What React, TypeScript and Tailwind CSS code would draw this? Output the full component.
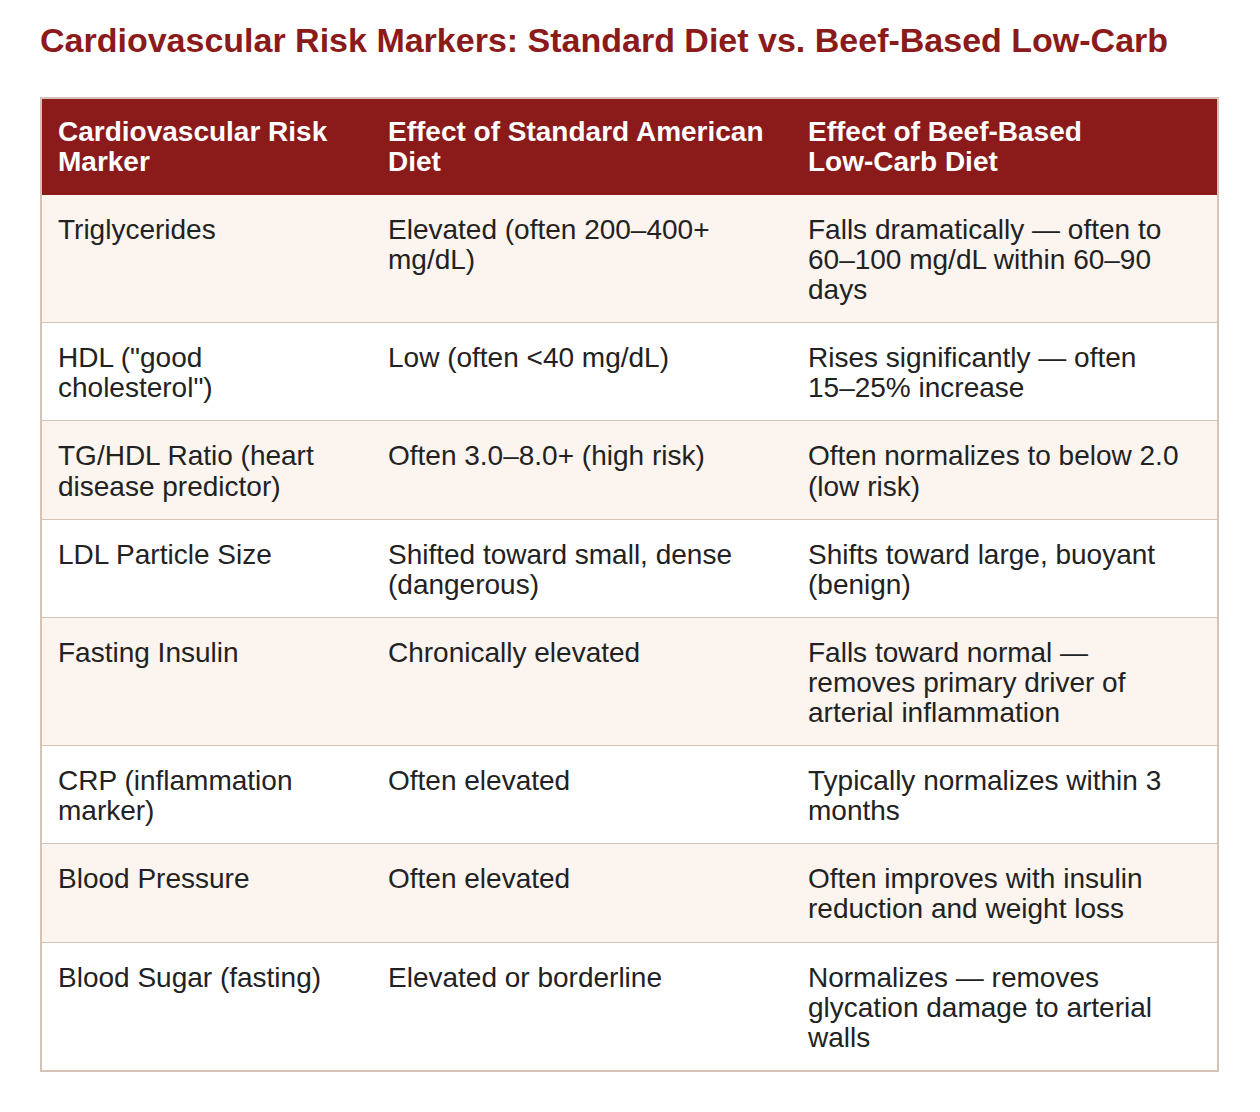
const ROWS: [string, string, string][] = [
  ["Triglycerides", "Elevated (often 200–400+ mg/dL)", "Falls dramatically — often to 60–100 mg/dL within 60–90 days"],
  ['HDL ("good cholesterol")', "Low (often <40 mg/dL)", "Rises significantly — often 15–25% increase"],
  ["TG/HDL Ratio (heart disease predictor)", "Often 3.0–8.0+ (high risk)", "Often normalizes to below 2.0 (low risk)"],
  ["LDL Particle Size", "Shifted toward small, dense (dangerous)", "Shifts toward large, buoyant (benign)"],
  ["Fasting Insulin", "Chronically elevated", "Falls toward normal — removes primary driver of arterial inflammation"],
  ["CRP (inflammation marker)", "Often elevated", "Typically normalizes within 3 months"],
  ["Blood Pressure", "Often elevated", "Often improves with insulin reduction and weight loss"],
  ["Blood Sugar (fasting)", "Elevated or borderline", "Normalizes — removes glycation damage to arterial walls"],
];

const HEADERS = ["Cardiovascular Risk Marker", "Effect of Standard American Diet", "Effect of Beef-Based Low-Carb Diet"];

// words like "Low-Carb" or "15–25%" stay on one line
function Cell({ text }: { text: string }) {
  const words = text.split(" ");
  return (
    <>
      {words.map((w, i) => (
        <span key={i}>
          {/[-–]/.test(w) && w.length > 1 ? <span className="whitespace-nowrap">{w}</span> : w}
          {i < words.length - 1 ? " " : ""}
        </span>
      ))}
    </>
  );
}

export default function App() {
  return (
    <div className="min-h-[1112px] bg-white px-[40px] pt-[20px] font-['Liberation_Sans',Arial,sans-serif]">
      <h1 className="text-[34px] font-bold leading-[40px] text-[#8b1a1a]">
        Cardiovascular Risk Markers: Standard Diet vs. Beef-Based Low-Carb
      </h1>
      <div className="mt-[37px] w-[1179px] border-2 border-[#d5c4b5]">
        <table className="w-full table-fixed border-collapse text-[28px] leading-[30px]">
          <colgroup>
            <col className="w-[330px]" />
            <col className="w-[420px]" />
            <col className="w-[425px]" />
          </colgroup>
          <thead>
            <tr className="bg-[#8b1a1a] text-white">
              {HEADERS.map((h) => (
                <th key={h} className="px-4 pt-[18px] pb-[18px] text-left align-top font-bold">
                  <Cell text={h} />
                </th>
              ))}
            </tr>
          </thead>
          <tbody className="text-[#222222]">
            {ROWS.map((row, i) => (
              <tr
                key={row[0]}
                className={`border-b border-[#d5c4b5] last:border-b-0 ${i % 2 === 0 ? "bg-[#fbf4ef]" : "bg-white"}`}
              >
                {row.map((cell, j) => (
                  <td key={j} className="px-4 pt-[20px] pb-[17px] align-top leading-[30.1px]">
                    <Cell text={cell} />
                  </td>
                ))}
              </tr>
            ))}
          </tbody>
        </table>
      </div>
    </div>
  );
}
